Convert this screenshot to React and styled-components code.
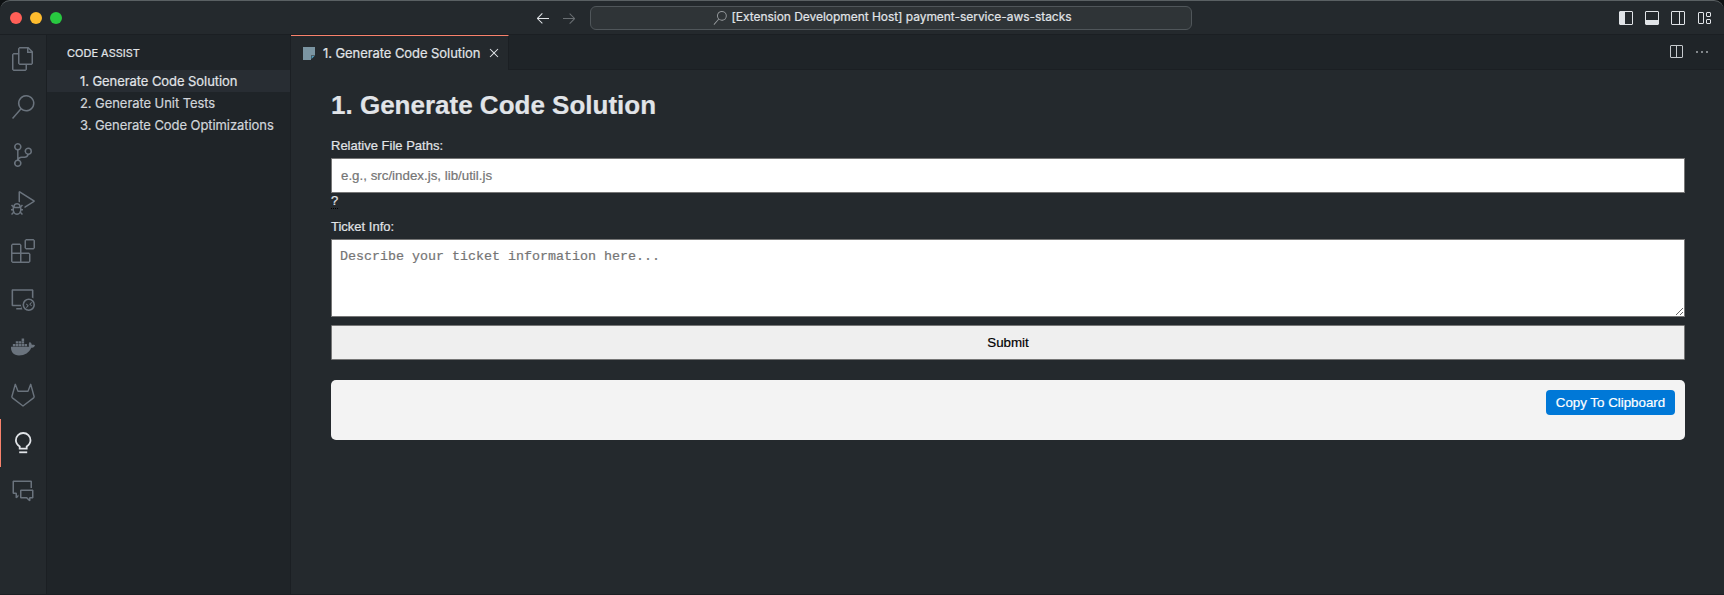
import React from "react";
import styled, { createGlobalStyle } from "styled-components";
import {
  VscFiles, VscSearch, VscSourceControl, VscDebugAlt, VscExtensions, VscRemoteExplorer,
  VscCommentDiscussion, VscArrowLeft, VscArrowRight, VscLayoutSidebarLeft, VscLayoutPanel,
  VscLayoutSidebarRightOff, VscLayout, VscSplitHorizontal, VscEllipsis, VscClose,
} from "react-icons/vsc";
import { FaDocker } from "react-icons/fa";

const ui = `Inter, "Liberation Sans", sans-serif`;
const line = "#1b1f23";

const GlobalStyle = createGlobalStyle`
  * { box-sizing: border-box; }
  html, body { margin: 0; height: 100%; background: #0e1113; overflow: hidden; }
  svg { display: block; flex: none; }
`;

const Window = styled.div`
  width: 100%;
  height: 595px;
  display: flex;
  flex-direction: column;
  background: #24292d;
  border-top: 1px solid #5a6063;
  border-bottom: 1px solid ${line};
  border-radius: 10px 10px 0 0;
  overflow: hidden;
  font-family: ${ui};
  font-size: 13px;
  color: #e1e4e8;
  -webkit-text-stroke: 0.2px;
`;

const TitleBar = styled.header`
  height: 34px;
  flex: none;
  display: grid;
  grid-template-columns: 590px 602px 1fr;
  align-items: center;
  border-bottom: 1px solid ${line};
`;

const TitleLeft = styled.div`
  display: flex;
  align-items: center;
  justify-content: space-between;
  padding: 0 13px 0 10px;
`;

const Lights = styled.div`
  display: flex;
  gap: 8px;
  padding-top: 1px;
`;

const Light = styled.span`
  width: 12px;
  height: 12px;
  border-radius: 50%;
  background: ${(p) => p.$color};
`;

const IconRow = styled.div`
  display: flex;
  align-items: center;
  gap: 10px;
`;

const Icon = styled.span`
  display: flex;
  color: ${(p) => p.$color || "#e1e4e8"};
`;

const CommandCenter = styled.div`
  height: 24px;
  display: flex;
  align-items: center;
  justify-content: center;
  gap: 5px;
  padding-left: 2px;
  background: #2f3437;
  border: 1px solid #50565a;
  border-radius: 6px;
  font-size: 12px;
  line-height: 20px;
  white-space: nowrap;
`;

const CommandText = styled.span`
  letter-spacing: -0.045px;
  padding-bottom: 2px;
`;

const TitleRight = styled.div`
  display: flex;
  justify-content: flex-end;
  padding-right: 12px;
`;

const Body = styled.div`
  flex: 1;
  min-height: 0;
  display: flex;
`;

const ActivityBar = styled.nav`
  width: 47px;
  flex: none;
  border-right: 1px solid ${line};
`;

const ActivityItem = styled.div`
  height: 48px;
  display: flex;
  align-items: center;
  padding-left: ${(p) => (p.$active ? 10 : 11)}px;
  border-left: ${(p) => (p.$active ? "1px solid #f9826c" : "none")};
  color: ${(p) => (p.$active ? "#e1e4e8" : "#6a737d")};
`;

const SideBar = styled.aside`
  width: 244px;
  flex: none;
  background: #1f2428;
  border-right: 1px solid ${line};
`;

const SideTitle = styled.div`
  height: 35px;
  line-height: 36px;
  padding-left: 20px;
  font-size: 11px;
`;

const TreeRow = styled.div`
  height: 22px;
  line-height: 23px;
  padding-left: 33px;
  white-space: nowrap;
  letter-spacing: -0.07px;
  color: ${(p) => (p.$selected ? "#e1e4e8" : "#d1d5da")};
  background: ${(p) => (p.$selected ? "#282d33" : "transparent")};
`;

const Editor = styled.main`
  flex: 1;
  min-width: 0;
  display: flex;
  flex-direction: column;
`;

const TabBar = styled.div`
  height: 35px;
  flex: none;
  display: flex;
  background: #1f2428;
`;

const Tab = styled.div`
  width: 218px;
  display: flex;
  align-items: center;
  padding-left: 12px;
  background: #24292d;
  border-top: 1px solid #f9826c;
  border-right: 1px solid ${line};
`;

const TabLabel = styled.span`
  width: 171px;
  padding: 0 0 1px 8px;
  letter-spacing: -0.07px;
  white-space: nowrap;
`;

const TabActions = styled.div`
  flex: 1;
  display: flex;
  align-items: center;
  justify-content: flex-end;
  padding-right: 14px;
  border-bottom: 1px solid ${line};
`;

const WebView = styled.div`
  flex: 1;
  padding: 20px 39px 0 40px;
  font-family: "Liberation Sans", Arial, sans-serif;
`;

const Heading = styled.h1`
  margin: 0 0 18px;
  font-size: 26px;
  line-height: 30px;
`;

const Label = styled.label`
  display: block;
  line-height: 15px;
  margin-bottom: 5px;
`;

const TextInput = styled.input`
  display: block;
  width: 100%;
  height: 35px;
  margin: 0;
  padding: 8px 8px 8px 9px;
  background: #fff;
  border: 1px solid #767676;
  border-radius: 0;
  font: 13.333px "Liberation Sans", Arial, sans-serif;
  &::placeholder { color: #757575; }
`;

const Help = styled.span`
  display: block;
  width: 7px;
  height: 16px;
  line-height: 15px;
  margin-bottom: 10px;
  border-bottom: 1px dotted #000;
`;

const TextArea = styled.textarea`
  display: block;
  width: 100%;
  height: 78px;
  margin: 0 0 8px;
  padding: 9px 8px 8px;
  background: #fff;
  border: 1px solid #767676;
  border-radius: 0;
  resize: vertical;
  font: 13.333px/15px "Liberation Mono", "Courier New", monospace;
  &::placeholder { color: #757575; }
`;

const Submit = styled.button`
  display: block;
  width: 100%;
  height: 35px;
  background: #efefef;
  border: 1px solid #767676;
  border-radius: 1px;
  color: #000;
  font: 13.333px "Liberation Sans", Arial, sans-serif;
`;

const Output = styled.section`
  height: 60px;
  margin-top: 20px;
  padding: 10px;
  display: flex;
  justify-content: flex-end;
  align-items: flex-start;
  background: #f3f3f3;
  border-radius: 5px;
`;

const CopyButton = styled.button`
  width: 129px;
  height: 25px;
  padding: 0;
  border: 0;
  border-radius: 4px;
  background: #0078d7;
  color: #fff;
  font: 13.333px "Liberation Sans", Arial, sans-serif;
`;

const GitlabIcon = () => (
  <svg width="24" height="24" viewBox="0 0 24 24" fill="none" stroke="currentColor" strokeWidth="1.4" strokeLinejoin="round">
    <path d="M4.3 1.3 7 8.2h10l2.7-6.9 3.4 12.2c.1.5 0 1-.5 1.4L12 23 1.4 14.9c-.5-.4-.6-.9-.5-1.4z" />
  </svg>
);

const BulbIcon = () => (
  <svg width="24" height="24" viewBox="0 0 24 24" fill="none" stroke="currentColor" strokeWidth="1.8">
    <path d="M8.7 17.6v-2.200C6.400 14 4.900 12 4.900 9.300a7.300 7.300 0 0 1 14.600 0c0 2.700-1.500 4.700-3.800 6.100v2.200z" />
    <path d="M8.200 21.300h8" />
  </svg>
);

const FileIcon = () => (
  <svg width="12" height="13" viewBox="0 0 12 13">
    <path d="M0 0h12v8.500H8V13H0z" fill="#7b95a2" />
    <path d="M8.500 9H11.500L8.500 12z" fill="#519aba" />
  </svg>
);

const activities = [
  VscFiles, VscSearch, VscSourceControl, VscDebugAlt, VscExtensions,
  VscRemoteExplorer, FaDocker, GitlabIcon, BulbIcon, VscCommentDiscussion,
];

const tree = ["1. Generate Code Solution", "2. Generate Unit Tests", "3. Generate Code Optimizations"];

export default function App() {
  return (
    <Window>
      <GlobalStyle />
      <TitleBar>
        <TitleLeft>
          <Lights>
            <Light $color="#ff5f57" />
            <Light $color="#febc2e" />
            <Light $color="#28c840" />
          </Lights>
          <IconRow>
            <Icon><VscArrowLeft size={16} /></Icon>
            <Icon $color="#696e72"><VscArrowRight size={16} /></Icon>
          </IconRow>
        </TitleLeft>
        <CommandCenter>
          <Icon $color="#979b9e"><VscSearch size={14} /></Icon>
          <CommandText>[Extension Development Host] payment-service-aws-stacks</CommandText>
        </CommandCenter>
        <TitleRight>
          <IconRow>
            <VscLayoutSidebarLeft size={16} />
            <VscLayoutPanel size={16} />
            <VscLayoutSidebarRightOff size={16} />
            <VscLayout size={16} />
          </IconRow>
        </TitleRight>
      </TitleBar>
      <Body>
        <ActivityBar>
          {activities.map((Glyph, i) => (
            <ActivityItem key={i} $active={i === 8}><Glyph size={24} /></ActivityItem>
          ))}
        </ActivityBar>
        <SideBar>
          <SideTitle>CODE ASSIST</SideTitle>
          {tree.map((t, i) => <TreeRow key={t} $selected={i === 0}>{t}</TreeRow>)}
        </SideBar>
        <Editor>
          <TabBar>
            <Tab>
              <FileIcon />
              <TabLabel>1. Generate Code Solution</TabLabel>
              <Icon><VscClose size={16} /></Icon>
            </Tab>
            <TabActions>
              <IconRow>
                <Icon $color="#c6cace"><VscSplitHorizontal size={16} /></Icon>
                <Icon $color="#a5aaae"><VscEllipsis size={16} /></Icon>
              </IconRow>
            </TabActions>
          </TabBar>
          <WebView>
            <Heading>1. Generate Code Solution</Heading>
            <Label htmlFor="paths">Relative File Paths:</Label>
            <TextInput id="paths" placeholder="e.g., src/index.js, lib/util.js" />
            <Help>?</Help>
            <Label htmlFor="ticket">Ticket Info:</Label>
            <TextArea id="ticket" placeholder="Describe your ticket information here..." />
            <Submit>Submit</Submit>
            <Output>
              <CopyButton>Copy To Clipboard</CopyButton>
            </Output>
          </WebView>
        </Editor>
      </Body>
    </Window>
  );
}
